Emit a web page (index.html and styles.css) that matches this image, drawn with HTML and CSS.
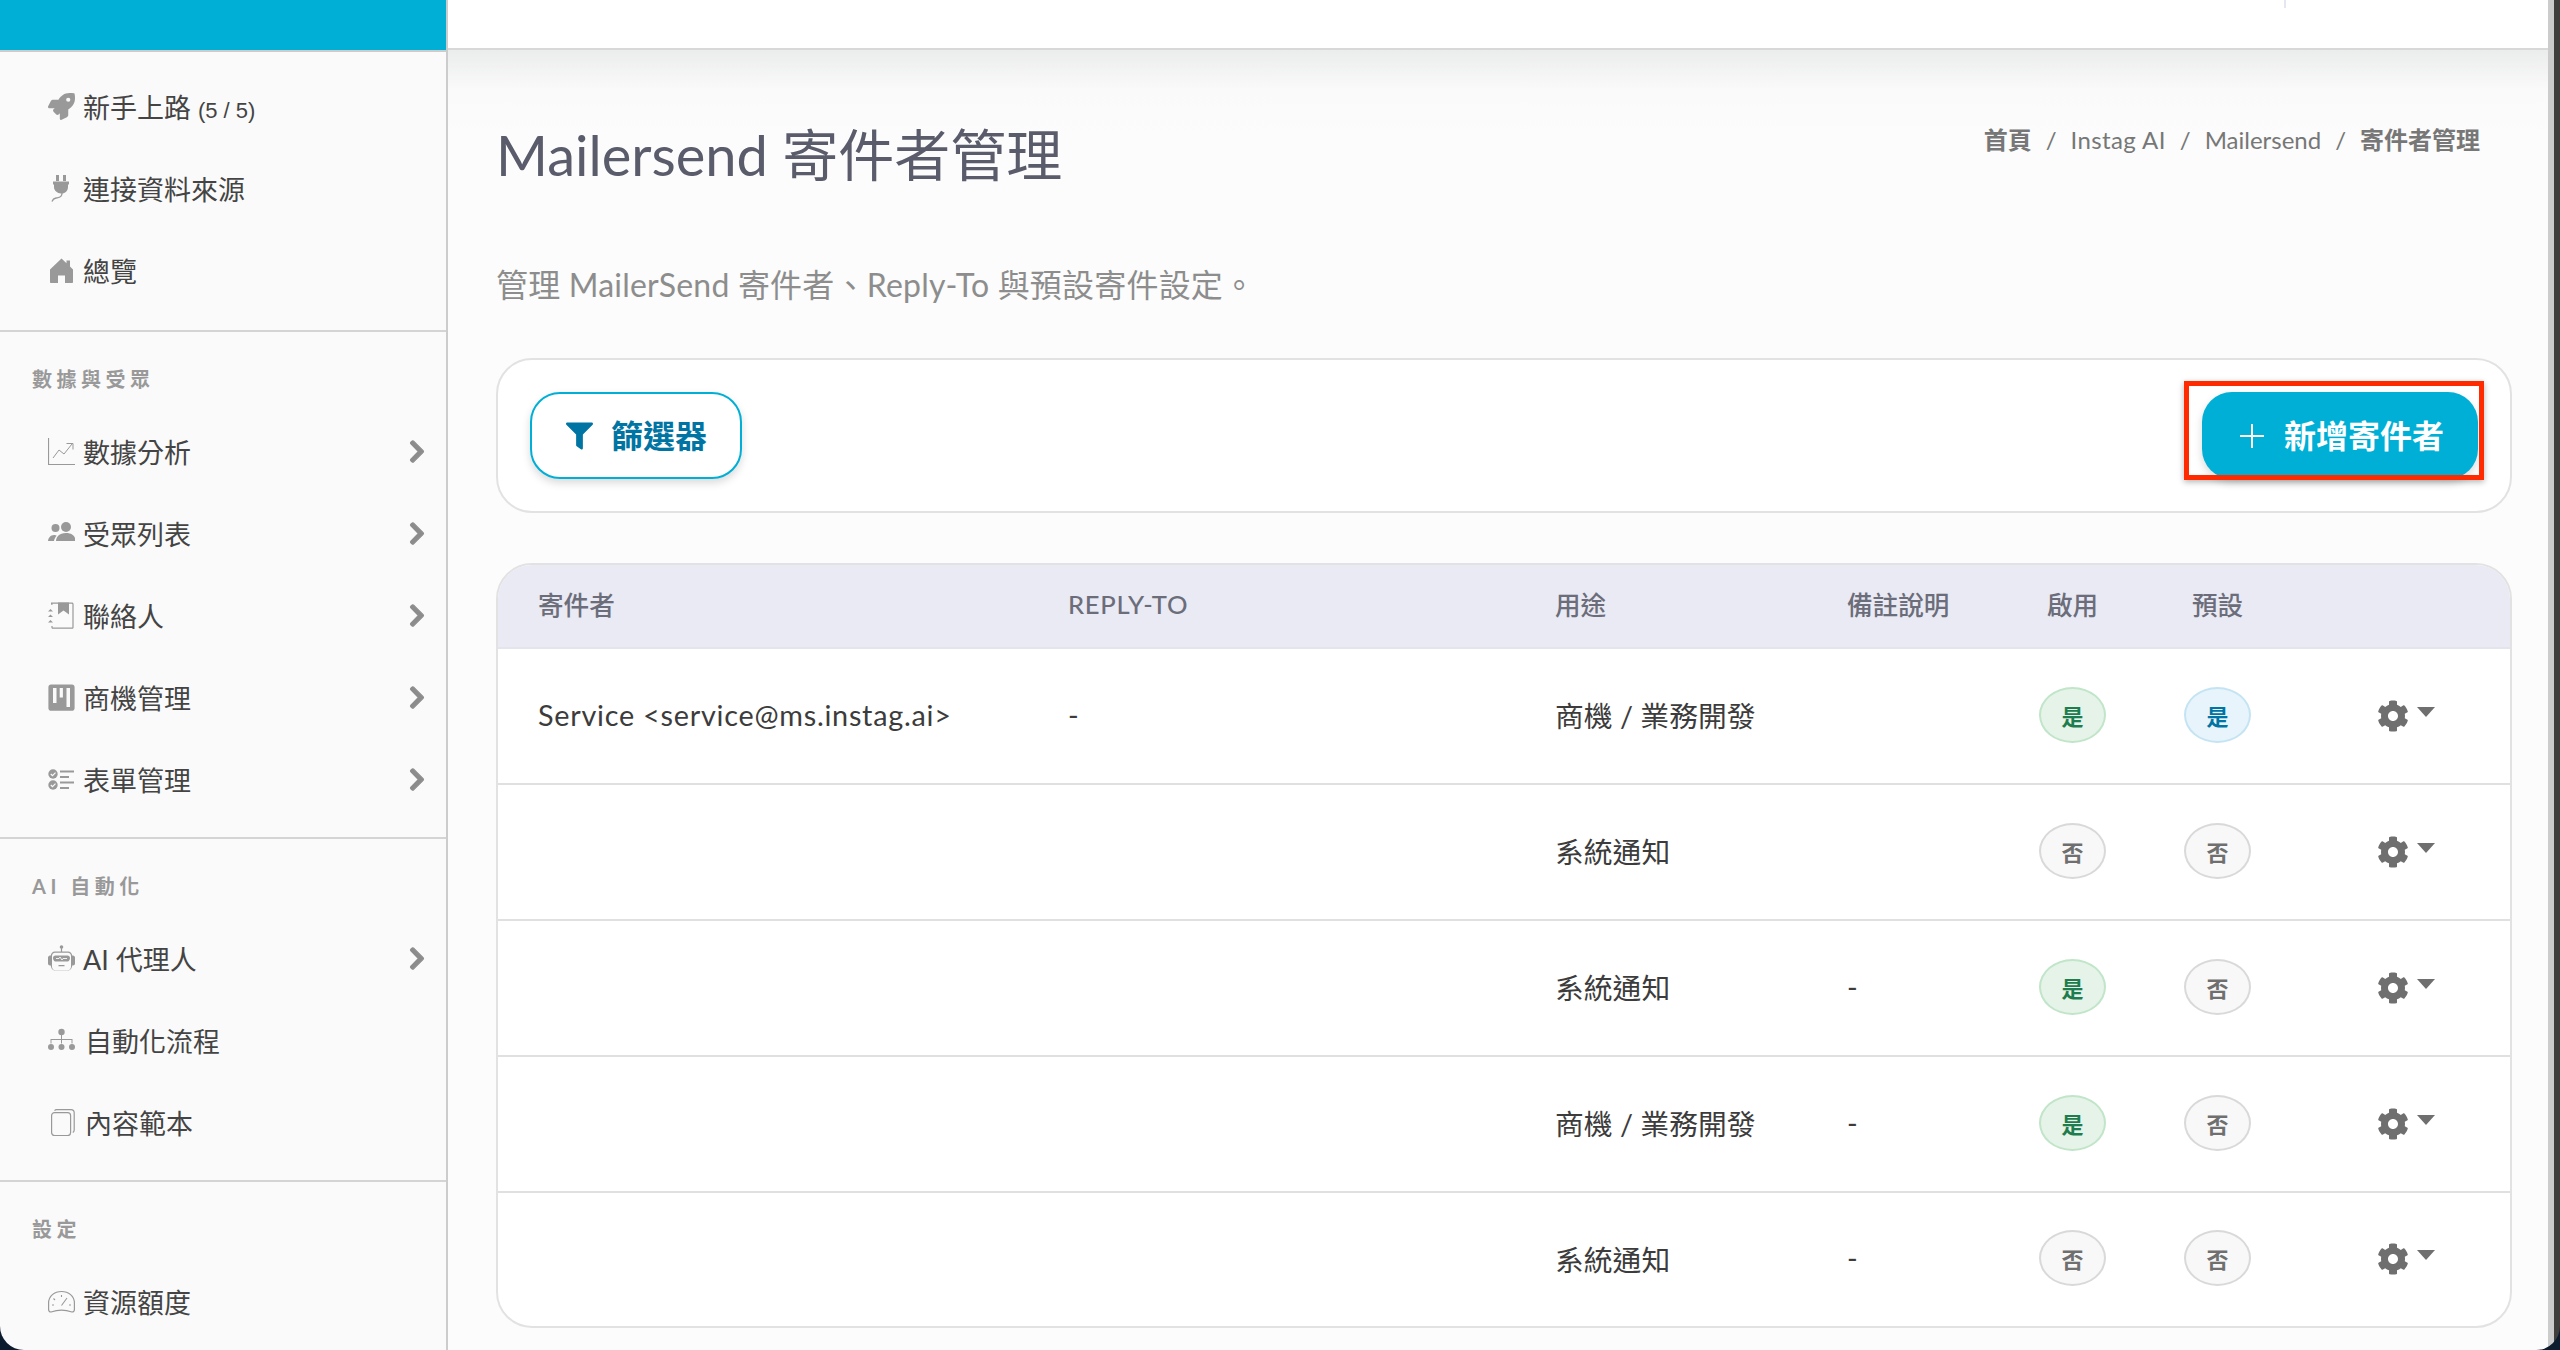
FILE: index.html
```html
<!DOCTYPE html>
<html lang="zh-Hant">
<head>
    <meta charset="UTF-8">
    <title>Mailersend 寄件者管理</title>
    <link rel="stylesheet" href="styles.css">
</head>
<body>
    <svg class="icon-defs" aria-hidden="true">
        <symbol id="i-chevron" viewBox="0 0 320 512"><path d="M285.476 272.971L91.132 467.314c-9.373 9.373-24.569 9.373-33.941 0l-22.667-22.667c-9.357-9.357-9.375-24.522-.04-33.901L188.505 256 34.484 101.255c-9.335-9.379-9.317-24.544.04-33.901l22.667-22.667c9.373-9.373 24.569-9.373 33.941 0L285.475 239.03c9.373 9.372 9.373 24.568.001 33.941z"/></symbol>
        <symbol id="i-cog" viewBox="0 0 512 512"><path d="M487.4 315.7l-42.6-24.6c4.3-23.2 4.3-47 0-70.2l42.6-24.6c4.9-2.8 7.1-8.6 5.5-14-11.1-35.6-30-67.8-54.7-94.6-3.8-4.1-10-5.1-14.8-2.3L380.8 110c-17.9-15.4-38.5-27.3-60.8-35.1V25.8c0-5.6-3.9-10.5-9.4-11.7-36.7-8.2-74.3-7.8-109.2 0-5.5 1.2-9.4 6.1-9.4 11.7V75c-22.2 7.9-42.8 19.8-60.8 35.1L88.7 85.5c-4.9-2.8-11-1.9-14.8 2.3-24.7 26.7-43.6 58.9-54.7 94.6-1.7 5.4.6 11.2 5.5 14L67.3 221c-4.3 23.2-4.3 47 0 70.2l-42.6 24.6c-4.9 2.8-7.1 8.6-5.5 14 11.1 35.6 30 67.8 54.7 94.6 3.8 4.1 10 5.1 14.8 2.3l42.6-24.6c17.9 15.4 38.5 27.3 60.8 35.1v49.2c0 5.6 3.9 10.5 9.4 11.7 36.7 8.2 74.3 7.8 109.2 0 5.5-1.2 9.4-6.1 9.4-11.7v-49.2c22.2-7.9 42.8-19.8 60.8-35.1l42.6 24.6c4.9 2.8 11 1.9 14.8-2.3 24.7-26.7 43.6-58.9 54.7-94.6 1.5-5.5-.7-11.3-5.6-14.1zM256 336c-44.1 0-80-35.9-80-80s35.9-80 80-80 80 35.9 80 80-35.9 80-80 80z"/></symbol>
    </svg>

    <div class="window">
        <aside class="sidebar">
            <div class="logo-bar"></div>

            <nav class="nav-group nav-first">
                <a class="nav-item">
                    <svg class="nav-icon" viewBox="0 0 512 512"><path d="M505.1 19.100c-1.200-5.500-6.700-11-12.200-12.200C460.700 0 435.500 0 410.400 0 307.200 0 245.300 55.200 199.100 128H94.800c-16.300 0-35.500 11.900-42.900 26.500L2.500 253.300A28.400 28.400 0 0 0 0 264a24 24 0 0 0 24 24h103.800l-22.500 22.500c-11.400 11.400-13 32.300 0 45.300l50.900 50.900c11.200 11.200 32.200 13.200 45.300 0l22.500-22.500V488a24 24 0 0 0 24 24 28.600 28.600 0 0 0 10.700-2.500l98.700-49.400c14.600-7.300 26.500-26.500 26.500-42.900V312.800c72.600-46.300 128-108.400 128-211.100.1-25.200.1-50.400-6.900-82.600zM384 168a40 40 0 1 1 40-40 40 40 0 0 1-40 40z"/></svg>
                    <span>新手上路 <small class="nav-count">(5 / 5)</small></span>
                </a>
                <a class="nav-item">
                    <svg class="nav-icon" viewBox="0 0 27 27"><path d="M8 0h3v6H8zM15 0h3v6h-3zM5 6.500h16v3h-1v2.500c0 3.500-2.500 6-5.500 6.500-.5 0-1 .1-1.500.1-1.800 0-3.600-.7-4.900-2-1.600-1.500-2.100-3-2.100-4.600V9.500H5z"/><path d="M14 18c0 5-3.500 4.500-6 5s-3.500 2-4 3.500" fill="none" stroke="currentColor" stroke-width="1.300"/></svg>
                    <span>連接資料來源</span>
                </a>
                <a class="nav-item">
                    <svg class="nav-icon" viewBox="0 0 27 27"><path d="M13.500 1.500L2 12.500V25c0 .6.400 1 1 1h7v-7.500h7V26h7c.6 0 1-.4 1-1V12.500l-3-2.900V3.500h-3.500v2.800z"/></svg>
                    <span>總覽</span>
                </a>
            </nav>

            <nav class="nav-group">
                <div class="nav-label">數據與受眾</div>
                <a class="nav-item">
                    <svg class="nav-icon" viewBox="0 0 27 27" fill="none" stroke="currentColor"><path d="M.5 0v26.500H27" stroke-width="1.200"/><path d="M5 20l6-8 5 4 8-10M18.500 5.500H25v6" stroke-width="1"/></svg>
                    <span>數據分析</span>
                    <svg class="nav-chevron"><use href="#i-chevron"/></svg>
                </a>
                <a class="nav-item">
                    <svg class="nav-icon" viewBox="0 0 27 27"><circle cx="7.500" cy="8" r="4"/><circle cx="18" cy="7" r="5"/><path d="M0 21c.3-3 2.500-6 6-6 1.300 0 2 .3 2.700.7C7.300 17 6.300 19 6 21zM8 21c.3-4 3-8 10-8s9.500 4 9.500 8z"/></svg>
                    <span>受眾列表</span>
                    <svg class="nav-chevron"><use href="#i-chevron"/></svg>
                </a>
                <a class="nav-item">
                    <svg class="nav-icon" viewBox="0 0 27 27"><path d="M3 2.500V.6h21c.8 0 1.600.7 1.600 1.600v23c0 .9-.8 1.600-1.600 1.600H5c-.9 0-1.600-.7-1.600-1.600V24h1.200v1.200c0 .2.200.4.400.4h19c.2 0 .4-.2.400-.4v-23c0-.2-.2-.4-.4-.4H4.500v1.200z"/><path d="M10 .6h11v12l-5.500-4-5.500 4zM0 9.500L2.500 7l2.500 2.500zM0 15l2.500-2.500L5 15zM0 20.500L2.500 18 5 20.500z"/></svg>
                    <span>聯絡人</span>
                    <svg class="nav-chevron"><use href="#i-chevron"/></svg>
                </a>
                <a class="nav-item">
                    <svg class="nav-icon" viewBox="0 0 27 27"><path fill-rule="evenodd" d="M3 .6h21c1.500 0 2.600 1.100 2.600 2.600v21c0 1.500-1.100 2.600-2.600 2.600H3c-1.500 0-2.600-1.100-2.600-2.600v-21C.4 1.700 1.500.6 3 .6zM5 4v15h3.500V4zM11.700 4v9.500h3.200V4zM18.500 4v19H22V4z"/></svg>
                    <span>商機管理</span>
                    <svg class="nav-chevron"><use href="#i-chevron"/></svg>
                </a>
                <a class="nav-item">
                    <svg class="nav-icon" viewBox="0 0 27 27"><circle cx="5" cy="8" r="4.700"/><circle cx="5" cy="19" r="4.700"/><path d="M2.800 8l1.700 1.700 3-3M2.800 19l1.700 1.700 3-3" fill="none" stroke="#fafafa" stroke-width="1.200"/><path d="M12 4.500h14v2H12zM12 10h9v2h-9zM12 15.500h14v2H12zM12 21h9v2h-9z"/></svg>
                    <span>表單管理</span>
                    <svg class="nav-chevron"><use href="#i-chevron"/></svg>
                </a>
            </nav>

            <nav class="nav-group">
                <div class="nav-label">AI 自動化</div>
                <a class="nav-item">
                    <svg class="nav-icon" viewBox="0 0 27 27"><circle cx="13.500" cy="2" r="1.800"/><path d="M12.900 3h1.200v4h-1.200zM7 6.500h13c2.500 0 4 1.700 4.200 4H25c1 0 2 1 2 2v6c0 1-1 2-2 2h-.8c-.2 2.500-1.800 5-4.200 5H7c-2.500 0-4-2.500-4.200-5H2c-1 0-2-1-2-2v-6c0-1 1-2 2-2h.8C3 8.200 4.500 6.500 7 6.500zm0 1.300c-1.800 0-3 1.300-3 3.200v10.500c0 2 1.200 3.700 3 3.700h13c1.800 0 3-1.700 3-3.700V11c0-1.900-1.200-3.200-3-3.200zM7.500 10.500h12c1.500 0 2.500 1 2.500 2.500s-1 3.500-2.500 3.500h-12C6 16.500 5 14.500 5 13s1-2.500 2.500-2.500zM10.500 20h6v1.300h-6z"/><path d="M8 13.500h3l1-1.500 2 3 1-1.500h4" fill="none" stroke="#fafafa" stroke-width=".9"/></svg>
                    <span>AI 代理人</span>
                    <svg class="nav-chevron"><use href="#i-chevron"/></svg>
                </a>
                <a class="nav-item">
                    <svg class="nav-icon" viewBox="0 0 27 27"><circle cx="13.500" cy="5" r="3.200"/><circle cx="3" cy="20" r="3"/><circle cx="13.500" cy="20" r="3"/><circle cx="24" cy="20" r="3"/><path d="M13 8h1v4h10.500v4.500h-1V13H14v3.500h-1V13H3.500v3.500h-1V12H13z"/></svg>
                    <span class="nav-text-shift">自動化流程</span>
                </a>
                <a class="nav-item">
                    <svg class="nav-icon" viewBox="0 0 27 27" fill="none" stroke="currentColor" stroke-width="1.200"><rect x="3.600" y="3.600" width="19" height="23" rx="3"/><path d="M6.500 1.600c.6-.6 1.300-1 2-1H23c1.800 0 3.200 1.400 3.200 3.200V21c0 1-.6 2-1.400 2.600"/></svg>
                    <span class="nav-text-shift">內容範本</span>
                </a>
            </nav>

            <nav class="nav-group">
                <div class="nav-label">設定</div>
                <a class="nav-item">
                    <svg class="nav-icon" viewBox="0 0 27 27" fill="none" stroke="currentColor" stroke-width="1.200"><path d="M3 24c-1.500 0-2.400-1-2.400-2.500V15C.6 8 6.500 3.500 13.500 3.500S26.400 8 26.400 15v6.500c0 1.500-.9 2.500-2.400 2.500-3-1-6.500-1.800-10.500-1.800S6 23 3 24z"/><path d="M13.500 7v2M5.500 10.500l1.500 1.500M4 17h2M21 17h2M13.500 17.500L19 10" stroke-width="1.100"/></svg>
                    <span>資源額度</span>
                </a>
            </nav>
        </aside>

        <div class="main">
            <header class="topbar"><span class="topbar-tick"></span></header>

            <main class="content">
                <div class="page-head">
                    <h1 class="page-title">Mailersend 寄件者管理</h1>
                    <ol class="breadcrumb">
                        <li class="crumb-strong">首頁</li>
                        <li class="crumb-sep">/</li>
                        <li class="crumb-latin">Instag AI</li>
                        <li class="crumb-sep">/</li>
                        <li>Mailersend</li>
                        <li class="crumb-sep">/</li>
                        <li class="crumb-strong">寄件者管理</li>
                    </ol>
                </div>
                <p class="page-desc">管理 MailerSend 寄件者、Reply-To 與預設寄件設定。</p>

                <div class="toolbar">
                    <button class="btn btn-outline">
                        <svg class="btn-filter" viewBox="0 0 512 512"><path d="M487.976 0H24.028C2.71 0-8.047 25.866 7.058 40.971L192 225.941V432c0 7.831 3.821 15.17 10.237 19.662l80 55.98C298.02 518.69 320 507.493 320 487.98V225.941l184.947-184.97C520.021 25.896 509.338 0 487.976 0z"/></svg>
                        篩選器
                    </button>
                    <div class="highlight">
                        <button class="btn btn-primary">
                            <svg class="btn-plus" viewBox="0 0 24 24"><path d="M12 0v24M0 12h24" stroke="currentColor" stroke-width="2"/></svg>
                            新增寄件者
                        </button>
                    </div>
                </div>

                <div class="table-card">
                    <table class="sender-table">
                        <colgroup>
                            <col class="col-sender"><col class="col-reply"><col class="col-use"><col class="col-note"><col class="col-on"><col class="col-default"><col>
                        </colgroup>
                        <thead>
                            <tr>
                                <th>寄件者</th><th class="th-latin">REPLY-TO</th><th>用途</th><th>備註說明</th><th>啟用</th><th>預設</th><th></th>
                            </tr>
                        </thead>
                        <tbody>
                            <tr>
                                <td class="sender-name">Service &lt;service@ms.instag.ai&gt;</td><td>-</td><td>商機 / 業務開發</td><td></td>
                                <td><span class="badge badge-green">是</span></td>
                                <td><span class="badge badge-blue">是</span></td>
                                <td class="cell-actions"><svg class="gear"><use href="#i-cog"/></svg><span class="caret"></span></td>
                            </tr>
                            <tr>
                                <td></td><td></td><td>系統通知</td><td></td>
                                <td><span class="badge">否</span></td>
                                <td><span class="badge">否</span></td>
                                <td class="cell-actions"><svg class="gear"><use href="#i-cog"/></svg><span class="caret"></span></td>
                            </tr>
                            <tr>
                                <td></td><td></td><td>系統通知</td><td>-</td>
                                <td><span class="badge badge-green">是</span></td>
                                <td><span class="badge">否</span></td>
                                <td class="cell-actions"><svg class="gear"><use href="#i-cog"/></svg><span class="caret"></span></td>
                            </tr>
                            <tr>
                                <td></td><td></td><td>商機 / 業務開發</td><td>-</td>
                                <td><span class="badge badge-green">是</span></td>
                                <td><span class="badge">否</span></td>
                                <td class="cell-actions"><svg class="gear"><use href="#i-cog"/></svg><span class="caret"></span></td>
                            </tr>
                            <tr>
                                <td></td><td></td><td>系統通知</td><td>-</td>
                                <td><span class="badge">否</span></td>
                                <td><span class="badge">否</span></td>
                                <td class="cell-actions"><svg class="gear"><use href="#i-cog"/></svg><span class="caret"></span></td>
                            </tr>
                        </tbody>
                    </table>
                </div>
            </main>
        </div>

        <div class="edge-light"></div>
        <div class="edge-dark"></div>
    </div>
</body>
</html>
```

FILE: styles.css
```css
* {
    box-sizing: border-box;
}
html, body {
    height: 100%;
}
body {
    margin: 0;
    background-color: #0c1c2e;
    font-family: Lato, "Noto Sans CJK TC", sans-serif;
    color: #444;
    overflow: hidden;
}
.icon-defs {
    display: none;
}
.window {
    display: flex;
    height: 1350px;
    border-radius: 0 0 24px 24px;
    overflow: hidden;
}

/* sidebar */
.sidebar {
    width: 448px;
    flex-shrink: 0;
    background-color: #fafafa;
    border-right: 2px solid #ccc;
}
.logo-bar {
    height: 52px;
    background-color: #00afd6;
    border-bottom: 2px solid #ccc;
}
.nav-group {
    padding-bottom: 17px;
    border-bottom: 2px solid #d4d4d4;
}
.nav-group:last-child {
    border-bottom: none;
}
.nav-first {
    padding-top: 13px;
    padding-bottom: 19px;
}
.nav-label {
    height: 78px;
    padding: 34px 0 0 32px;
    font-size: 20px;
    line-height: 26px;
    font-weight: 700;
    letter-spacing: 4.500px;
    color: #999;
}
.nav-item {
    display: flex;
    align-items: center;
    height: 82px;
    padding: 0 21px 0 48px;
    font-size: 27px;
    color: #444;
}
.nav-icon {
    width: 27px;
    height: 27px;
    margin-right: 8px;
    flex-shrink: 0;
    fill: #999;
    color: #999;
}
.nav-icon[fill="none"] {
    fill: none;
}
.nav-count {
    font-family: "Liberation Sans", sans-serif;
    font-size: 22px;
}
.nav-text-shift {
    margin-left: 2px;
}
.nav-chevron {
    width: 16px;
    height: 25px;
    margin-left: auto;
    fill: #8c8c8c;
    stroke: #8c8c8c;
    stroke-width: 24px;
}

/* main column */
.main {
    flex: 1;
    display: flex;
    flex-direction: column;
    min-width: 0;
}
.topbar {
    flex-shrink: 0;
    display: flex;
    justify-content: flex-end;
    height: 50px;
    padding-right: 262px;
    background-color: #fff;
    border-bottom: 2px solid #d8d8d8;
}
.topbar-tick {
    width: 2px;
    height: 8px;
    background-color: #e5e6f0;
}
.content {
    flex: 1;
    padding: 71px 36px 0 48px;
    background: linear-gradient(#ebecec, #fafafa 40px, #fbfcfb 90px);
}
.page-head {
    display: flex;
    justify-content: space-between;
    align-items: flex-start;
}
.page-title {
    margin: 0;
    font-size: 56px;
    line-height: 67px;
    font-weight: 400;
    color: #5a5b6b;
}
.breadcrumb {
    display: flex;
    gap: 14px;
    margin: 2px 32px 0 0;
    padding: 0;
    list-style: none;
    font-size: 24px;
    line-height: 34px;
    color: #777;
}
.crumb-strong {
    font-weight: 700;
}
.crumb-latin {
    letter-spacing: 0.400px;
}
.page-desc {
    margin: 75px 0 51px;
    font-size: 32px;
    line-height: 44px;
    letter-spacing: 0.200px;
    color: #8d8d8d;
}

/* toolbar */
.toolbar {
    display: flex;
    justify-content: space-between;
    align-items: center;
    height: 155px;
    padding: 0 32px;
    margin-bottom: 50px;
    background-color: #fff;
    border: 2px solid #e2e2e2;
    border-radius: 36px;
}
.btn {
    display: flex;
    align-items: center;
    height: 87px;
    padding-bottom: 5px;
    border-radius: 30px;
    font-family: inherit;
    font-size: 32px;
    font-weight: 700;
    box-shadow: 0 4px 8px rgba(0,0,0,0.15);
}
.btn-outline {
    width: 212px;
    padding-left: 34px;
    background-color: #fff;
    border: 2px solid #00afd6;
    color: #0074a3;
}
.btn-filter {
    width: 27px;
    height: 28px;
    margin: 5px 18px 0 0;
    fill: #0074a3;
}
.btn-primary {
    width: 276px;
    padding-left: 38px;
    background-color: #00afd6;
    border: none;
    color: #fff;
}
.btn-plus {
    width: 24px;
    height: 24px;
    margin: 5px 20px 0 0;
}

/* red annotation round the add button */
.highlight {
    position: relative;
}
.highlight::after {
    content: "";
    position: absolute;
    top: -11px;
    left: -18px;
    right: -6px;
    bottom: -1px;
    border: 5px solid #ff2a00;
    box-shadow: 0 2px 6px rgba(0,0,0,0.3);
}

/* table */
.table-card {
    background-color: #fff;
    border: 2px solid #e2e2e2;
    border-radius: 36px;
    overflow: hidden;
}
.sender-table {
    width: 100%;
    table-layout: fixed;
    border-collapse: collapse;
}
.col-sender { width: 529px; }
.col-reply { width: 487px; }
.col-use { width: 292px; }
.col-note { width: 200px; }
.col-on { width: 145px; }
.col-default { width: 146px; }
.sender-table th {
    height: 83px;
    padding: 0 0 5px 41px;
    background-color: #e9eaf3;
    border-bottom: 2px solid #e4e5ec;
    text-align: left;
    font-size: 25.600px;
    font-weight: 500;
    color: #6c6d7a;
}
.sender-table td {
    height: 136px;
    padding: 0 0 3px 41px;
    border-bottom: 2px solid #e0e0e0;
    font-size: 28.800px;
    color: #3c3c3c;
}
.sender-table tr:last-child td {
    border-bottom: none;
    height: 134px;
}
.sender-table th:first-child, .sender-table .sender-name {
    padding-left: 40px;
}
.sender-table .th-latin {
    letter-spacing: 0.700px;
}
.sender-table .sender-name {
    letter-spacing: 0.750px;
}
.badge {
    display: inline-flex;
    align-items: center;
    justify-content: center;
    width: 67px;
    height: 56px;
    margin-left: -8px;
    vertical-align: middle;
    background-color: #f8f8f8;
    border: 2px solid #d9d9d9;
    border-radius: 50%;
    font-size: 22px;
    font-weight: 700;
    color: #6f6f6f;
}
.badge-green {
    background-color: #e6f3e9;
    border-color: #c0e5c8;
    color: #1e7d4f;
}
.badge-blue {
    background-color: #e8f4fb;
    border-color: #c4e4f3;
    color: #0074a3;
}
.sender-table .cell-actions {
    padding-left: 80px;
}
.gear {
    width: 32px;
    height: 32px;
    fill: #6f6f6f;
    vertical-align: middle;
    margin-top: -4px;
}
.caret {
    display: inline-block;
    margin: -12px 0 0 8px;
    vertical-align: middle;
    border-top: 10px solid #6f6f6f;
    border-left: 9px solid transparent;
    border-right: 9px solid transparent;
}
.edge-light {
    width: 6px;
    flex-shrink: 0;
    background-color: #ccc;
}
.edge-dark {
    width: 6px;
    flex-shrink: 0;
    background-color: #413e3e;
}
```
